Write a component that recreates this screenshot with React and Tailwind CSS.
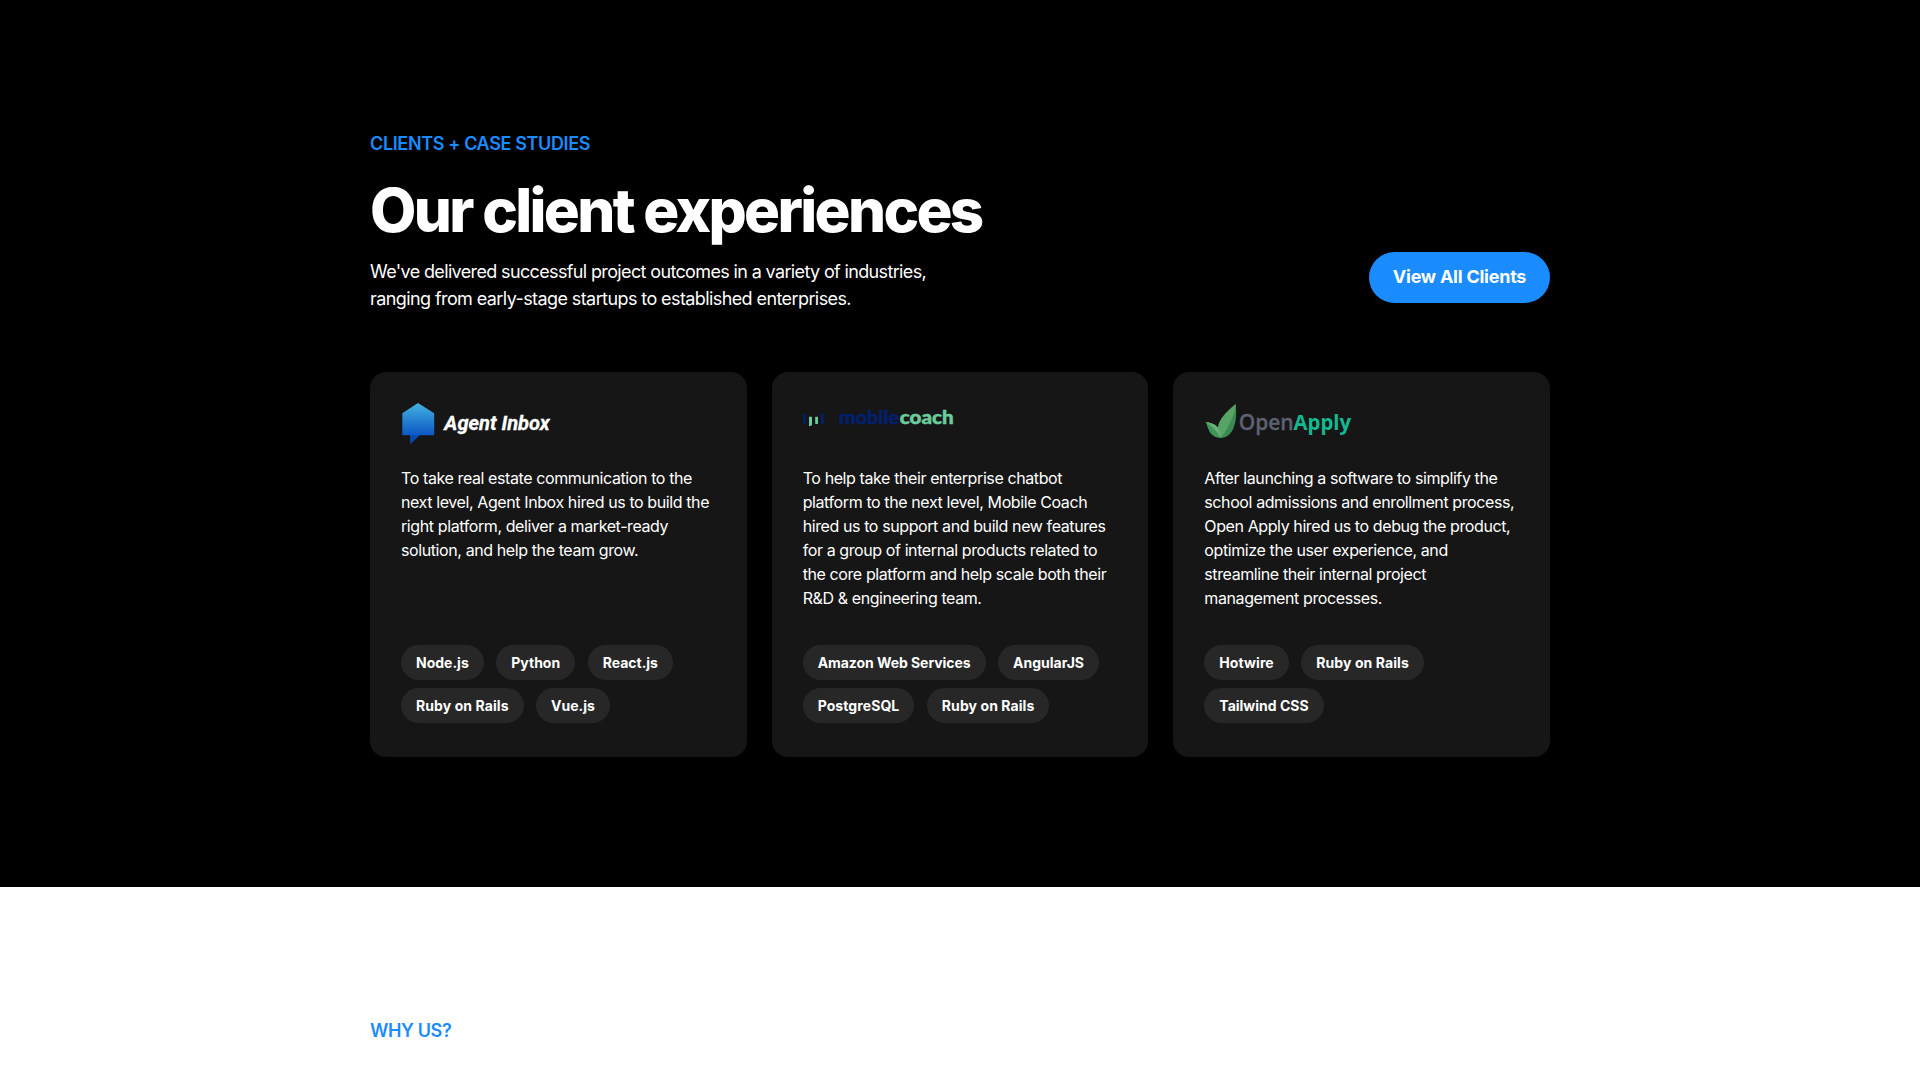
function AgentInboxLogo() {
  return (
    <svg className="block h-[63px] w-[180px]" viewBox="401 403 180 63" role="img" aria-label="Agent Inbox">
      <defs>
        <linearGradient id="agentHouse" x1="0" y1="0" x2="0" y2="1">
          <stop offset="0" stopColor="#43b2e0" />
          <stop offset="1" stopColor="#0d57c4" />
        </linearGradient>
      </defs>
      <path d="M410 434h11l-10.800 10.300z" fill="#0a48b4" />
      <path d="M402.300 413.300 418 403l16.200 10.300v21.500q0 .5-.5.500h-30.900q-.5 0-.5-.5z" fill="url(#agentHouse)" />
      <text x="444.300" y="430" textLength="105.500" lengthAdjust="spacingAndGlyphs" fill="#ffffff" stroke="#ffffff" strokeWidth=".3" className="font-['Roboto',sans-serif] text-[20px] font-bold italic">
        Agent Inbox
      </text>
    </svg>
  );
}

function MobileCoachLogo() {
  return (
    <svg className="block h-[63px] w-[180px]" viewBox="803 403 180 63" role="img" aria-label="mobilecoach">
      <g fill="#02206c">
        <rect x="803.300" y="413.700" width="2.400" height="10.300" rx=".6" />
        <rect x="821" y="413.700" width="2.600" height="10.300" rx=".6" />
      </g>
      <g fill="#6ccb9c">
        <path d="M809 416.800h3v7.600q0 1.500-3 1.900z" />
        <rect x="815.200" y="416.800" width="2.800" height="7.200" rx=".4" />
      </g>
      <g className="font-['Lato',sans-serif] text-[19.500px] font-black" strokeWidth=".5">
        <text x="839" y="423.600" textLength="60" lengthAdjust="spacingAndGlyphs" fill="#02206c" stroke="#02206c">mobile</text>
        <text x="899.800" y="423.600" textLength="54" lengthAdjust="spacingAndGlyphs" fill="#6ccb9c" stroke="#6ccb9c">coach</text>
      </g>
    </svg>
  );
}

function OpenApplyLogo() {
  return (
    <svg className="block h-[63px] w-[180px]" viewBox="1204 403 180 63" role="img" aria-label="OpenApply">
      <path d="M1235.700 404c.8 9 .8 18-2.800 25.500-2.600 5.400-7.400 8.500-12.200 8.500-5.200-8-2.700-15 2.300-21.500 3.800-4.800 8-8.500 12.700-12.500z" fill="#3b8a51" />
      <path d="M1235.700 404c-1 10-6 22-15 34-4.500-8-2.700-15 2.300-21.500 3.800-4.800 8-8.500 12.700-12.500z" fill="#58a467" />
      <path d="M1205.700 422c4 .6 8.800 1.800 11.500 4.800 2.600 3 3.400 7 3.500 11.200-6.500-.5-9.800-3.400-11.600-7.200-1.400-2.900-2-5.900-3.400-8.800z" fill="#3f9558" />
      <path d="M1205.700 422c4 .6 8.800 1.800 11.500 4.800 2.600 3 3.400 7 3.500 11.200-3.200-6.500-8.500-11.500-15-16z" fill="#68b077" />
      <g className="font-['Open_Sans',sans-serif] text-[21.500px]">
        <text x="1238.700" y="429.600" textLength="55" lengthAdjust="spacingAndGlyphs" fill="#5d6070" stroke="#5d6070" strokeWidth=".3" className="font-semibold">Open</text>
        <text x="1293.600" y="429.600" textLength="57.500" lengthAdjust="spacingAndGlyphs" fill="#14b991" className="font-bold">Apply</text>
      </g>
    </svg>
  );
}

const clients = [
  {
    name: "Agent Inbox",
    Logo: AgentInboxLogo,
    lines: [
      "To take real estate communication to the",
      "next level, Agent Inbox hired us to build the",
      "right platform, deliver a market-ready",
      "solution, and help the team grow.",
    ],
    tags: [["Node.js", "Python", "React.js"], ["Ruby on Rails", "Vue.js"]],
  },
  {
    name: "Mobile Coach",
    Logo: MobileCoachLogo,
    lines: [
      "To help take their enterprise chatbot",
      "platform to the next level, Mobile Coach",
      "hired us to support and build new features",
      "for a group of internal products related to",
      "the core platform and help scale both their",
      "R&D & engineering team.",
    ],
    tags: [["Amazon Web Services", "AngularJS"], ["PostgreSQL", "Ruby on Rails"]],
  },
  {
    name: "Open Apply",
    Logo: OpenApplyLogo,
    lines: [
      "After launching a software to simplify the",
      "school admissions and enrollment process,",
      "Open Apply hired us to debug the product,",
      "optimize the user experience, and",
      "streamline their internal project",
      "management processes.",
    ],
    tags: [["Hotwire", "Ruby on Rails"], ["Tailwind CSS"]],
  },
];

const tagTracking = {
  "Ruby on Rails": "tracking-[0.08px]",
  "Amazon Web Services": "tracking-[-0.06px]",
  PostgreSQL: "tracking-[0.08px]",
  Hotwire: "tracking-[0.08px]",
};

function ClientCard({ client }) {
  const { Logo, lines, tags } = client;
  return (
    <article className="flex h-[385px] flex-col rounded-2xl bg-[#161616] px-[31px] pt-[31px] pb-[34px]">
      <Logo />
      <p className="text-base leading-6 tracking-[-0.4px] whitespace-nowrap text-white">
        {lines.map((line) => (
          <span key={line} className="block">{line}</span>
        ))}
      </p>
      <div className="mt-auto flex flex-col gap-2">
        {tags.map((row) => (
          <div key={row[0]} className="flex gap-[12.500px]">
            {row.map((tag) => (
              <span key={tag} className={`rounded-full bg-[#272727] px-[15px] py-[7px] text-sm leading-[21px] font-bold whitespace-nowrap text-white ${tagTracking[tag] ?? ""}`}>
                {tag}
              </span>
            ))}
          </div>
        ))}
      </div>
    </article>
  );
}

function Eyebrow({ children }) {
  return <p className="text-lg leading-[27px] font-semibold tracking-[-0.36px] text-[#1a8cff]">{children}</p>;
}

export default function App() {
  return (
    <div className="h-[1080px] w-full overflow-hidden bg-white font-['Inter',sans-serif] antialiased">
      <section className="h-[887px] bg-black pt-[130px]">
        <div className="mx-auto w-[1180px]">
          <header className="flex items-end justify-between">
            <div>
              <Eyebrow>CLIENTS + CASE STUDIES</Eyebrow>
              <h2 className="mt-[23px] text-[60px] leading-[60px] font-extrabold tracking-[-2.67px] text-white">
                Our client experiences
              </h2>
              <p className="mt-[18px] text-lg leading-[27px] whitespace-nowrap text-white">
                <span className="block tracking-[-0.64px]">
                  We've delivered successful project outcomes in a variety of industries,
                </span>
                <span className="block tracking-[-0.59px]">
                  ranging from early-stage startups to established enterprises.
                </span>
              </p>
            </div>
            <button className="mb-[9px] h-[51px] w-[181px] rounded-full bg-[#1a8cff] pb-[3px] text-lg leading-[27px] font-bold tracking-[-0.25px] whitespace-nowrap text-white">
              View All Clients
            </button>
          </header>
          <div className="mt-[60px] grid grid-cols-3 gap-[25px]">
            {clients.map((client) => (
              <ClientCard key={client.name} client={client} />
            ))}
          </div>
        </div>
      </section>
      <section className="bg-white pt-[130px]">
        <div className="mx-auto w-[1180px]">
          <Eyebrow>WHY US?</Eyebrow>
        </div>
      </section>
    </div>
  );
}
